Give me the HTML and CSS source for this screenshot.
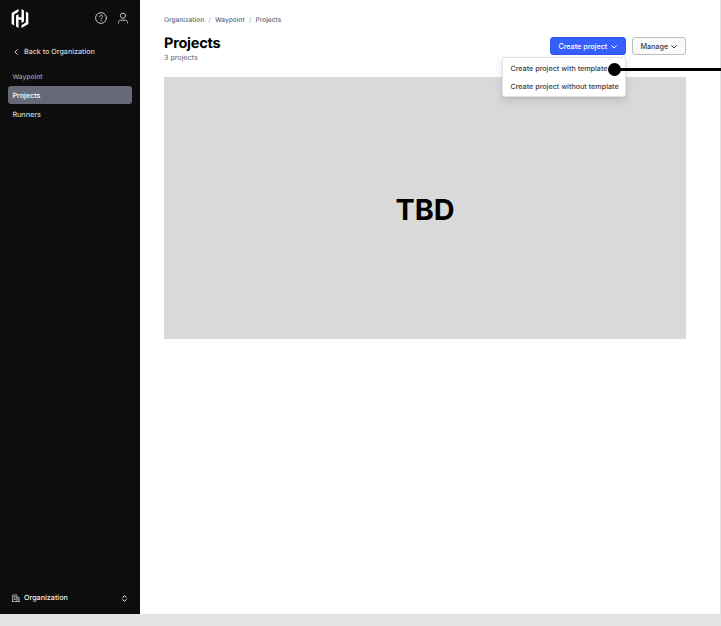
FILE: index.html
```html
<!DOCTYPE html>
<html lang="en">
<head>
<meta charset="utf-8">
<title>Projects</title>
<link rel="stylesheet" href="styles.css">
</head>
<body>
<div class="app">
  <aside class="sidebar">
    <div class="brand-bar">
      <svg class="logo" viewBox="1.400 0 21.200 24"><path d="M10.114 0 1.454 5v14l3.118 1.800V6.800l5.542-3.200zM13.886 0v10.320h-3.772V6.484l-3.119 1.800V22.200L10.114 24V13.720h3.772v3.815l3.119-1.800V1.800zM19.428 3.200v14l-5.542 3.200V24l8.660-5V5z"/></svg>
      <svg class="nav-icon help" viewBox="0 0 12 12"><circle cx="6" cy="6" r="5.400"/><path d="M4.500 4.700C4.600 2.500 7.600 2.700 7.500 4.600 7.500 5.800 6 5.800 6 7M6 8.500v.4"/></svg>
      <svg class="nav-icon" viewBox="0 0 12 12"><circle cx="6" cy="3.700" r="2.600"/><path d="M1.500 11V10.300c0-1.300.9-2.100 2.200-2.100h4.600c1.300 0 2.200.8 2.200 2.100v.7"/></svg>
    </div>
    <a class="back"><svg class="back-icon" viewBox="0 0 4 6"><path d="M3.200.7.9 3l2.300 2.300"/></svg><span>Back to Organization</span></a>
    <div class="nav-title">Waypoint</div>
    <nav class="nav">
      <a class="nav-item active">Projects</a>
      <a class="nav-item">Runners</a>
    </nav>
    <div class="switcher">
      <svg class="org-icon" viewBox="0 0 8 8"><path d="M.6 7.400V.9h4.200v6.500M4.800 3.300h2.300v4.100M.3 7.500h7.400M2 2.500h1.400M2 4h1.400M2 5.500h1.400M6 4.700v1.200"/></svg>
      <span>Organization</span>
      <svg class="sort-icon" viewBox="0 0 5 7"><path d="M.7 2.400 2.500.7l1.800 1.700M.7 4.600l1.800 1.700 1.800-1.700"/></svg>
    </div>
  </aside>
  <main class="main">
    <div class="crumbs"><a>Organization</a><i>/</i><a>Waypoint</a><i>/</i><a>Projects</a></div>
    <header class="header">
      <div class="heading">
        <h1>Projects</h1>
        <p>3 projects</p>
      </div>
      <div class="actions">
        <div class="dropdown">
          <button class="btn primary"><span>Create project</span><svg class="chevron" viewBox="0 0 6 4"><path d="M.7.7 3 3 5.300.7"/></svg></button>
          <div class="menu">
            <a>Create project with template</a>
            <a>Create project without template</a>
            <span class="connector"></span>
          </div>
        </div>
        <button class="btn secondary"><span>Manage</span><svg class="chevron" viewBox="0 0 6 4"><path d="M.7.7 3 3 5.300.7"/></svg></button>
      </div>
    </header>
    <section class="placeholder">TBD</section>
  </main>
</div>
</body>
</html>
```
FILE: styles.css
```css
* { box-sizing: border-box; }
body {
  margin: 0;
  height: 626px;
  overflow: hidden;
  background: #e4e4e4;
  font-family: Inter, "Liberation Sans", sans-serif;
  font-size: 7.2px;
  line-height: 10px;
  font-weight: 500;
  color: #3b3d45;
  text-rendering: geometricPrecision;
}
svg { display: block; flex: none; fill: none; stroke: currentColor; stroke-linecap: round; stroke-linejoin: round; }
h1, p { margin: 0; }
.app { display: flex; height: 614px; border-right: 1px solid #e2e2e2; }
.sidebar {
  width: 140px;
  flex: none;
  display: flex;
  flex-direction: column;
  padding: 9px 8px 11px;
  background: #0d0d0d;
  color: #d2d4da;
}
.brand-bar { display: flex; align-items: center; height: 18px; padding: 0 3px; }
.logo { width: 18px; height: 19px; fill: #fff; stroke: none; }
.nav-icon { width: 12px; height: 12px; stroke-width: 1; color: #c2c5cb; }
.help { margin: 0 10px 0 auto; }
.back { display: flex; align-items: center; gap: 6px; height: 10px; margin-top: 20px; padding-left: 6px; }
.back span { font-size: 7.150px; }
.back-icon { width: 4px; height: 6px; }
.nav-title { margin-top: 15px; padding-left: 4.400px; font-size: 6.700px; color: #9ea1aa; }
.nav { display: flex; flex-direction: column; gap: 1px; margin-top: 4px; }
.nav-item { height: 18px; padding-left: 4.400px; line-height: 19px; border-radius: 3px; }
.active { background: #656a76; color: #fff; }
.switcher { display: flex; align-items: center; margin-top: auto; padding: 0 5px 0 4px; color: #efeff1; }
.org-icon { width: 8px; height: 8px; margin-right: 4px; stroke-width: .8; color: #c2c5cb; }
.sort-icon { width: 5px; height: 7px; margin-left: auto; }
.main { flex: 1; padding: 15px 34px 0 24px; background: #fff; }
.crumbs { display: flex; height: 10px; font-size: 6.600px; color: #656a76; }
.crumbs i { margin: 0 4.200px; font-style: normal; color: #b0b3ba; }
.header { display: flex; justify-content: space-between; height: 52px; padding-top: 9px; }
h1 { margin-top: 2px; font-size: 14.500px; line-height: 16px; font-weight: 700; letter-spacing: -.25px; color: #000; }
.heading p { margin-top: 1px; font-size: 7.150px; color: #656a76; font-weight: 400; }
.actions { display: flex; align-items: flex-start; gap: 6px; margin-top: 3px; }
.dropdown { position: relative; }
.btn {
  display: flex;
  align-items: center;
  justify-content: space-between;
  height: 18px;
  margin: 0;
  padding: 1px 8px 0 7.400px;
  border: 1px solid;
  border-radius: 3px;
  font: inherit;
}
.primary { width: 76px; border-color: #2b54f2; background: #3560ff; color: #fff; }
.secondary { width: 54px; border-color: #bdbec2; background: #fafafa; color: #3b3d45; }
.chevron { width: 6px; height: 4px; }
.menu {
  position: absolute;
  top: 20px;
  right: 0;
  width: 124px;
  height: 40px;
  padding: 2px 7.400px;
  border: 1px solid #e3e4e6;
  border-radius: 3px;
  background: #fff;
  box-shadow: 0 1px 2px #65667622, 0 4px 8px #65667633;
}
.menu a { display: block; line-height: 18px; white-space: nowrap; }
.connector { position: absolute; left: 111px; top: 10px; width: 108px; height: 3px; background: #000; }
.connector::before { content: ""; position: absolute; left: -6px; top: -5px; width: 13px; height: 13px; border-radius: 50%; background: #000; }
.placeholder {
  display: flex;
  align-items: center;
  justify-content: center;
  height: 262px;
  padding-top: 4px;
  background: #d9d9d9;
  color: #000;
  font-size: 28.800px;
  font-weight: 650;
}
```
